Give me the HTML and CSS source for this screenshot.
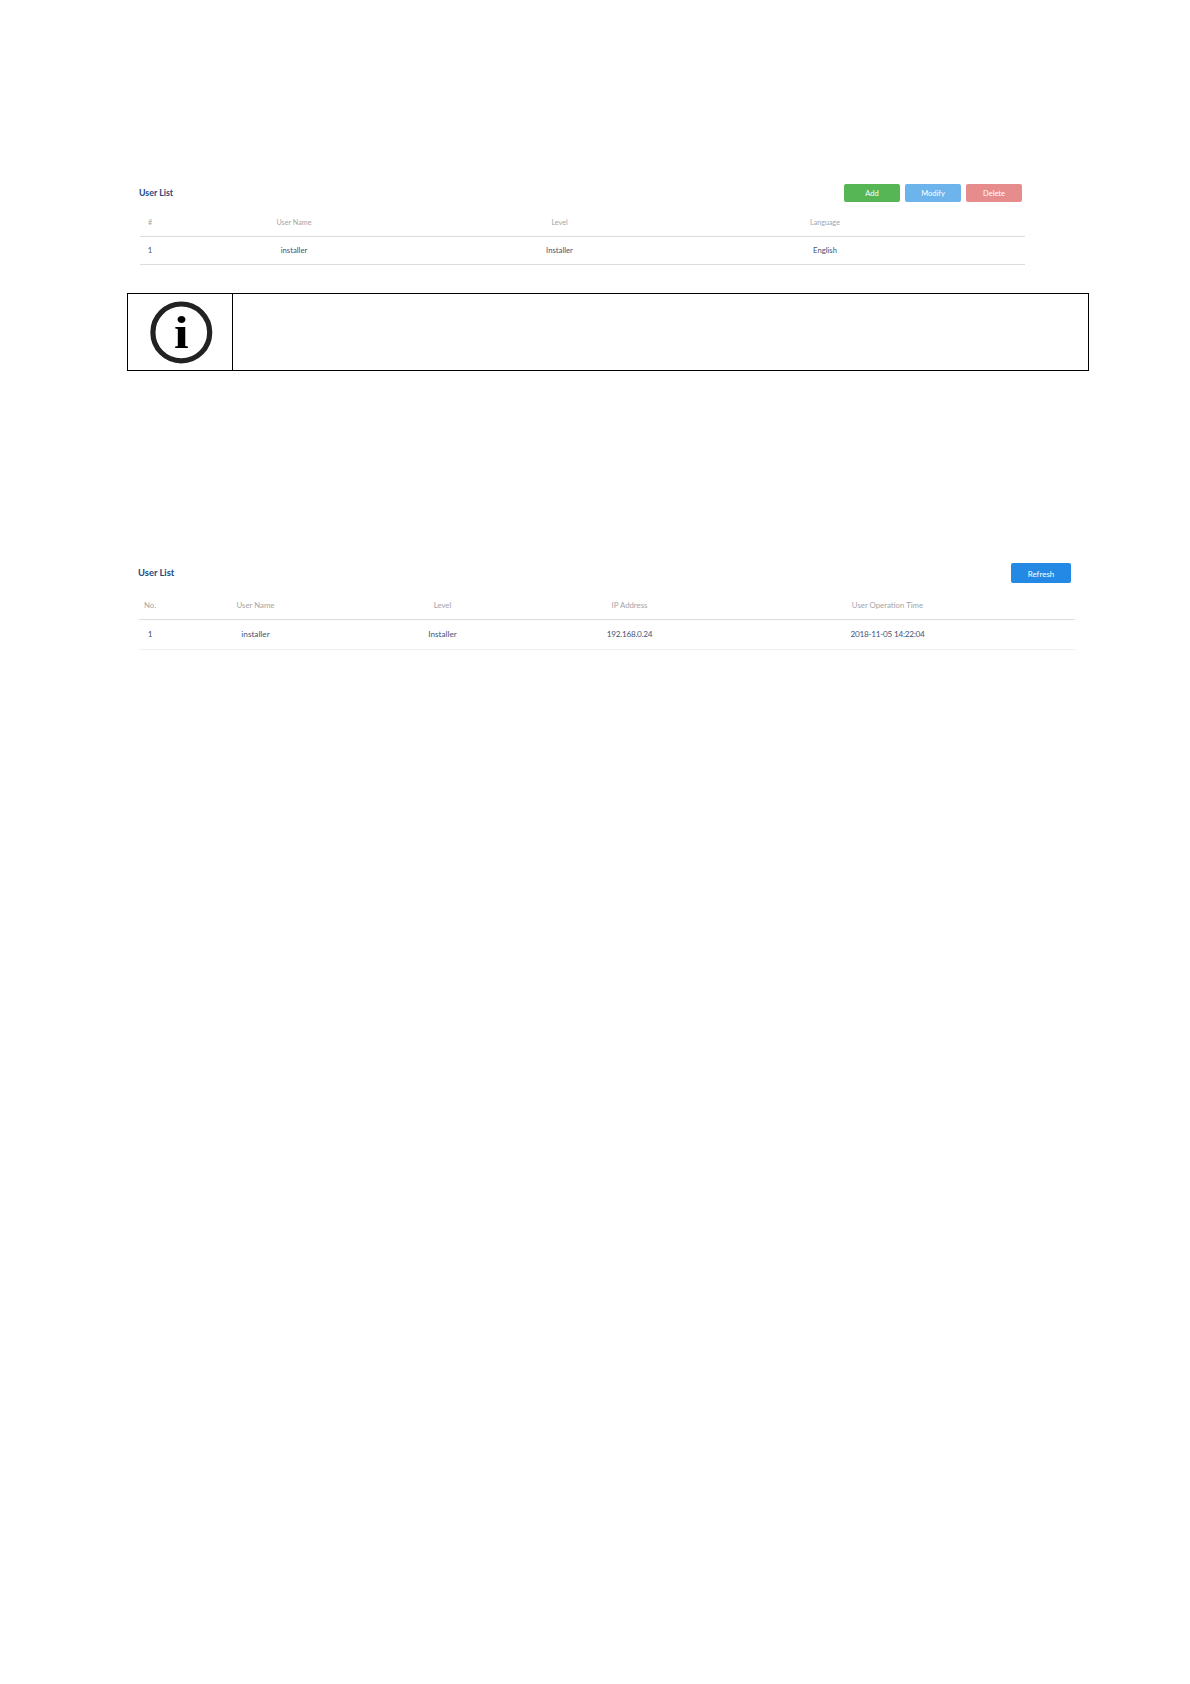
FILE: index.html
```html
<!DOCTYPE html>
<html lang="en">
<head>
    <meta charset="UTF-8">
    <meta name="viewport" content="width=device-width, initial-scale=1.0">
    <title>User List</title>
    <link rel="stylesheet" href="styles.css">
</head>
<body>
    <section class="panel users">
        <div class="panel-header">
            <h2>User List</h2>
            <div class="buttons">
                <button class="add">Add</button>
                <button class="modify">Modify</button>
                <button class="delete">Delete</button>
            </div>
        </div>
        <div class="table">
            <div class="row head">
                <span>#</span>
                <span>User Name</span>
                <span>Level</span>
                <span>Language</span>
            </div>
            <div class="row">
                <span>1</span>
                <span>installer</span>
                <span>Installer</span>
                <span>English</span>
            </div>
        </div>
    </section>

    <div class="note">
        <div class="note-icon">
            <svg width="64" height="64" viewBox="0 0 64 64">
                <circle cx="32.3" cy="32.4" r="28.4" fill="none" stroke="#222" stroke-width="5.2"/>
                <text transform="translate(32.3 48.3) scale(1.15 1)" text-anchor="middle" class="note-i">i</text>
            </svg>
        </div>
        <div class="note-text"></div>
    </div>

    <section class="panel sessions">
        <div class="panel-header">
            <h2>User List</h2>
            <div class="buttons">
                <button class="refresh">Refresh</button>
            </div>
        </div>
        <div class="table">
            <div class="row head">
                <span>No.</span>
                <span>User Name</span>
                <span>Level</span>
                <span>IP Address</span>
                <span>User Operation Time</span>
            </div>
            <div class="row">
                <span>1</span>
                <span>installer</span>
                <span>Installer</span>
                <span class="num">192.168.0.24</span>
                <span class="num">2018-11-05 14:22:04</span>
            </div>
        </div>
    </section>
</body>
</html>
```

FILE: styles.css
```css
body {
    margin: 0;
    padding: 184px 101px 0 127px;
    background: #fff;
    font-family: Lato, sans-serif;
    color: #3f5478;
}
.panel-header {
    display: flex;
    justify-content: space-between;
    align-items: center;
}
h2 {
    margin: 0;
    font-weight: bold;
    line-height: 12px;
    color: #24487c;
}
.buttons {
    display: flex;
    gap: 5px;
}
button {
    padding: 0;
    border: none;
    border-radius: 2px;
    color: #fff;
    font-family: inherit;
}
.row {
    display: grid;
    align-items: center;
    text-align: center;
    box-sizing: border-box;
    padding-bottom: 2px;
    border-bottom: 1px solid #dcdcde;
}
.head {
    padding-bottom: 0;
    color: #a3a5a9;
}

/* user accounts */
.users {
    width: 898px;
}
.users .panel-header {
    height: 18px;
    padding: 0 3px 0 12px;
}
.users h2 {
    font-size: 8.8px;
    margin-top: -1px;
}
.users button {
    width: 56px;
    height: 18px;
    font-size: 7.5px;
}
.add {
    background: #56b656;
}
.modify {
    background: #6db3ec;
}
.delete {
    background: #e68c8c;
}
.users .table {
    margin: 7px 0 0 13px;
    font-size: 7.7px;
}
.users .row {
    grid-template-columns: 20px 268px 263px 268px;
    height: 28px;
}
.users .head {
    font-size: 7.2px;
}

/* note box */
.note {
    display: flex;
    height: 76px;
    margin-top: 28px;
    border: 1px solid #000;
}
.note-icon {
    display: flex;
    align-items: center;
    justify-content: center;
    width: 105px;
    padding-left: 2px;
    box-sizing: border-box;
    border-right: 1px solid #000;
}
.note-text {
    flex: 1;
}
.note-i {
    font-family: "Liberation Serif", serif;
    font-weight: bold;
    font-size: 46px;
    fill: #000;
}

/* logged in users */
.sessions {
    width: 948px;
    margin-top: 192px;
}
.sessions .panel-header {
    height: 20px;
    padding: 0 4px 0 11px;
}
.sessions h2 {
    font-size: 9.4px;
    margin-top: -1px;
}
.sessions button {
    width: 60px;
    height: 20px;
    padding-top: 1px;
    font-size: 8px;
}
.refresh {
    background: #2389e4;
}
.sessions .table {
    margin: 8px 0 0 12px;
    font-size: 8.2px;
}
.sessions .row {
    grid-template-columns: 22px 189px 185px 189px 327px;
    height: 30px;
    border-bottom-color: #f1f1f3;
}
.sessions .head {
    height: 29px;
    font-size: 7.8px;
    border-bottom-color: #dcdcde;
}
.sessions .num {
    letter-spacing: -0.25px;
}
```
